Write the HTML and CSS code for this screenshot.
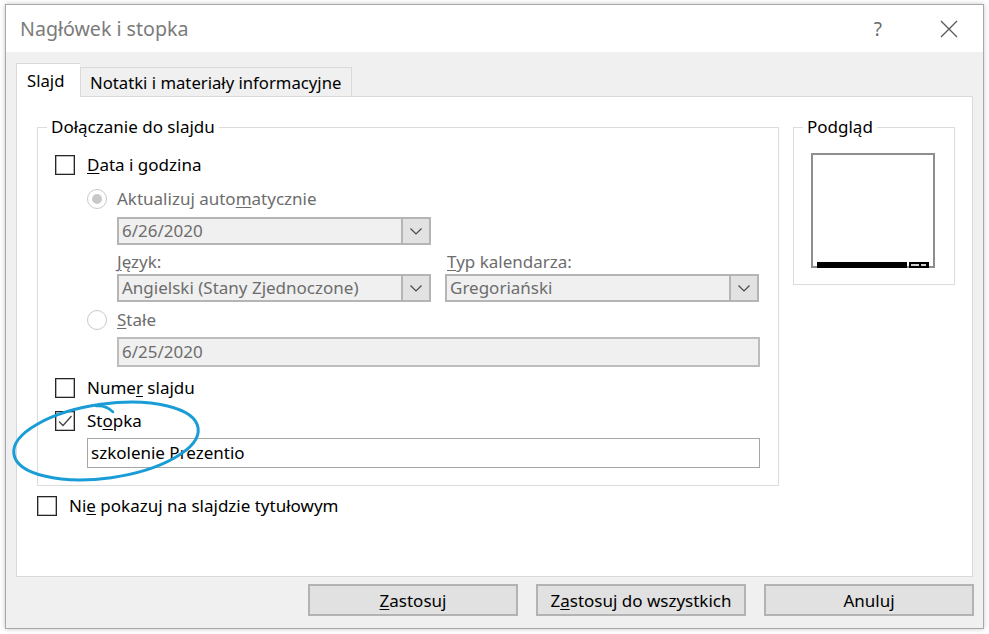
FILE: index.html
```html
<!DOCTYPE html>
<html lang="pl">
<head>
<meta charset="utf-8">
<title>Nagłówek i stopka</title>
<link rel="stylesheet" href="styles.css">
</head>
<body>
<div class="window">
  <div class="titlebar">
    <span class="title">Nagłówek i stopka</span>
    <span class="help">?</span>
    <span class="close"><svg width="18" height="18" viewBox="0 0 18 18"><path d="M1 1L17 17M17 1L1 17" stroke="#5a5a5a" stroke-width="1.3" fill="none"/></svg></span>
  </div>
  <div class="body">
    <div class="tabs">
      <div class="tab active">Slajd</div>
      <div class="tab">Notatki i materiały informacyjne</div>
    </div>
    <div class="panel">
      <div class="groups">
        <div class="group main-group">
          <span class="legend">Dołączanie do slajdu</span>
          <div class="row r-data"><span class="cb"></span><span class="lbl"><u>D</u>ata i godzina</span></div>
          <div class="indent">
            <div class="row r-auto"><span class="rb on"></span><span class="lbl dis">Aktualizuj auto<u>m</u>atycznie</span></div>
            <div class="sub">
              <div class="combo c-date"><span class="val">6/26/2020</span><span class="arrow"><svg width="12" height="7" viewBox="0 0 12 7"><path d="M0.5 0.5L6 6L11.5 0.5" stroke="#444" stroke-width="1.1" fill="none"/></svg></span></div>
              <div class="pair">
                <div class="col">
                  <div class="cap dis"><u>J</u>ęzyk:</div>
                  <div class="combo"><span class="val">Angielski (Stany Zjednoczone)</span><span class="arrow"><svg width="12" height="7" viewBox="0 0 12 7"><path d="M0.5 0.5L6 6L11.5 0.5" stroke="#444" stroke-width="1.1" fill="none"/></svg></span></div>
                </div>
                <div class="col">
                  <div class="cap dis cap2"><u>T</u>yp kalendarza:</div>
                  <div class="combo"><span class="val">Gregoriański</span><span class="arrow"><svg width="12" height="7" viewBox="0 0 12 7"><path d="M0.5 0.5L6 6L11.5 0.5" stroke="#444" stroke-width="1.1" fill="none"/></svg></span></div>
                </div>
              </div>
            </div>
            <div class="row r-fixed"><span class="rb"></span><span class="lbl dis"><u>S</u>tałe</span></div>
            <div class="sub"><div class="field field-dis">6/25/2020</div></div>
          </div>
          <div class="row r-num"><span class="cb"></span><span class="lbl">Nume<u>r</u> slajdu</span></div>
          <div class="row r-foot"><span class="cb"><svg width="18" height="18" viewBox="0 0 18 18"><path d="M3 9.5L7 13.5L15.5 4" stroke="#444" stroke-width="1.3" fill="none"/></svg></span><span class="lbl">St<u>o</u>pka</span></div>
          <div class="indent"><div class="field field-foot">szkolenie Prezentio</div></div>
        </div>
        <div class="group preview-group">
          <span class="legend">Podgląd</span>
          <div class="preview">
            <div class="pbar"><span class="pline"></span><span class="pnum"><i></i><i></i></span></div>
          </div>
        </div>
      </div>
      <div class="row r-title"><span class="cb"></span><span class="lbl">Ni<u>e</u> pokazuj na slajdzie tytułowym</span></div>
    </div>
    <div class="buttons">
      <button class="btn"><u>Z</u>astosuj</button>
      <button class="btn">Z<u>a</u>stosuj do wszystkich</button>
      <button class="btn">Anuluj</button>
    </div>
  </div>
</div>
<svg class="mark" width="989" height="634" viewBox="0 0 989 634">
  <ellipse cx="106" cy="441" rx="93" ry="37" transform="rotate(-8 106 441)" fill="none" stroke="#1a9dd6" stroke-width="3"/>
  <path d="M96 406 Q106 405 113 412" fill="none" stroke="#1a9dd6" stroke-width="2.5" stroke-linecap="round"/>
</svg>
</body>
</html>
```
FILE: styles.css
```css
* { box-sizing: border-box; }
html, body { margin: 0; }
body {
  width: 989px;
  height: 634px;
  padding: 4px 0 0 5px;
  background: #fff;
  font-family: "Noto Sans", "Open Sans", sans-serif;
  font-size: 17px;
  color: #000;
  position: relative;
  overflow: hidden;
}
u { text-decoration-thickness: 1px; text-underline-offset: 2px; }

.window {
  width: 979px;
  height: 625px;
  border: 1px solid #a8a8a8;
  box-shadow: 0 0 5px rgba(0,0,0,0.22);
  display: flex;
  flex-direction: column;
}

.titlebar {
  height: 47px;
  background: #fff;
  display: flex;
  align-items: center;
  padding-left: 14px;
  padding-right: 25px;
}
.title { flex: 1; font-size: 19.6px; color: #7b7b7b; }
.help { font-size: 19px; color: #6a6a6a; margin-right: 58px; }
.close { display: flex; }

.body {
  flex: 1;
  background: #f0f0f0;
  padding: 11px 10px 0 10px;
  display: flex;
  flex-direction: column;
}

.tabs {
  display: flex;
  align-items: flex-end;
  height: 33px;
  position: relative;
  z-index: 1;
}
.tab {
  height: 29px;
  border: 1px solid #d9d9d9;
  border-bottom: none;
  background: #f0f0f0;
  padding: 0 10px 0 9px;
  display: flex;
  align-items: center;
  white-space: nowrap;
  font-size: 16.7px;
}
.tab.active {
  height: 34px;
  margin-bottom: -1px;
  background: #fff;
  width: 64px;
  padding-left: 10px;
  border-right: none;
}

.panel {
  height: 481px;
  background: #fff;
  border: 1px solid #d9d9d9;
  padding: 30px 0 0 20px;
  display: flex;
  flex-direction: column;
}
.groups { display: flex; align-items: flex-start; }

.group {
  position: relative;
  border: 1px solid #dcdcdc;
}
.legend {
  position: absolute;
  top: -12px;
  left: 9px;
  background: #fff;
  padding: 0 4px;
  line-height: 22px;
  white-space: nowrap;
}
.main-group {
  width: 742px;
  height: 359px;
  padding: 27px 0 0 17px;
}
.preview-group {
  width: 162px;
  height: 158px;
  margin-left: 14px;
  padding: 25px 0 0 17px;
}

.row { display: flex; align-items: center; height: 20px; white-space: nowrap; }
.cb {
  width: 20px;
  height: 20px;
  border: 1px solid #262626;
  box-shadow: inset 0 0 0 0.6px rgba(0,0,0,0.5);
  background: #fff;
  display: flex;
  align-items: center;
  justify-content: center;
  flex: none;
}
.lbl { margin-left: 12px; margin-top: -2px; }
.dis { color: #6d6d6d; }
.rb {
  width: 20px;
  height: 20px;
  border-radius: 50%;
  border: 1.5px solid #c9c9c9;
  background: #fff;
  flex: none;
  display: flex;
  align-items: center;
  justify-content: center;
}
.rb.on::after {
  content: "";
  width: 10px;
  height: 10px;
  border-radius: 50%;
  background: #c9c9c9;
}
.rb + .lbl { margin-left: 10px; }

.indent { margin-left: 32px; }
.sub { margin-left: 30px; }
.r-auto { margin-top: 14px; }

.combo {
  display: flex;
  height: 28px;
  width: 314px;
  border: 2px solid #b5b5b5;
  background: #f0f0f0;
  color: #6d6d6d;
}
.c-date { margin-top: 8px; }
.combo .val { flex: 1; padding-left: 3px; line-height: 24px; white-space: nowrap; overflow: hidden; }
.combo .arrow {
  width: 28px;
  border-left: 2px solid #b5b5b5;
  background: #e2e2e2;
  display: flex;
  align-items: center;
  justify-content: center;
}
.pair { display: flex; gap: 14px; margin-top: 7px; }
.cap { line-height: 20px; height: 20px; margin-bottom: 2px; white-space: nowrap; }
.cap2 { padding-left: 2px; }

.r-fixed { margin-top: 8px; }
.field {
  height: 30px;
  border: 2px solid #bdbdbd;
  padding-left: 3px;
  line-height: 26px;
  white-space: nowrap;
}
.field-dis { width: 643px; margin-top: 7px; background: #f0f0f0; color: #6d6d6d; }
.r-num { margin-top: 11px; }
.r-foot { margin-top: 13px; }
.field-foot { width: 673px; margin-top: 7px; background: #fff; border: 1px solid #a6a6a6; padding-left: 3px; line-height: 28px; }

.preview {
  width: 124px;
  height: 115px;
  border: 2px solid #8e8e8e;
  background: #fff;
  display: flex;
  flex-direction: column;
  justify-content: flex-end;
  padding: 0 4px 0 4px;
}
.pbar { display: flex; margin-bottom: -2px; height: 6px; }
.pline { width: 92px; background: #000; }
.pnum {
  width: 20px;
  margin-left: 2px;
  background: #000;
  display: flex;
  align-items: center;
  padding: 0 2px;
  gap: 2px;
}
.pnum i { display: block; height: 2px; background: #d0d0d0; }
.pnum i:first-child { width: 8px; }
.pnum i:last-child { width: 5px; }

.r-title { margin-top: 10px; }

.buttons {
  display: flex;
  justify-content: flex-end;
  gap: 18px;
  margin-top: 7px;
  margin-right: -1px;
}
.btn {
  width: 210px;
  height: 32px;
  background: #e1e1e1;
  border: 2px solid #b3b3b3;
  font-family: "Noto Sans", "Open Sans", sans-serif;
  font-size: 17px;
  color: #000;
  padding: 0;
}

.mark { position: absolute; left: 0; top: 0; pointer-events: none; }
```
